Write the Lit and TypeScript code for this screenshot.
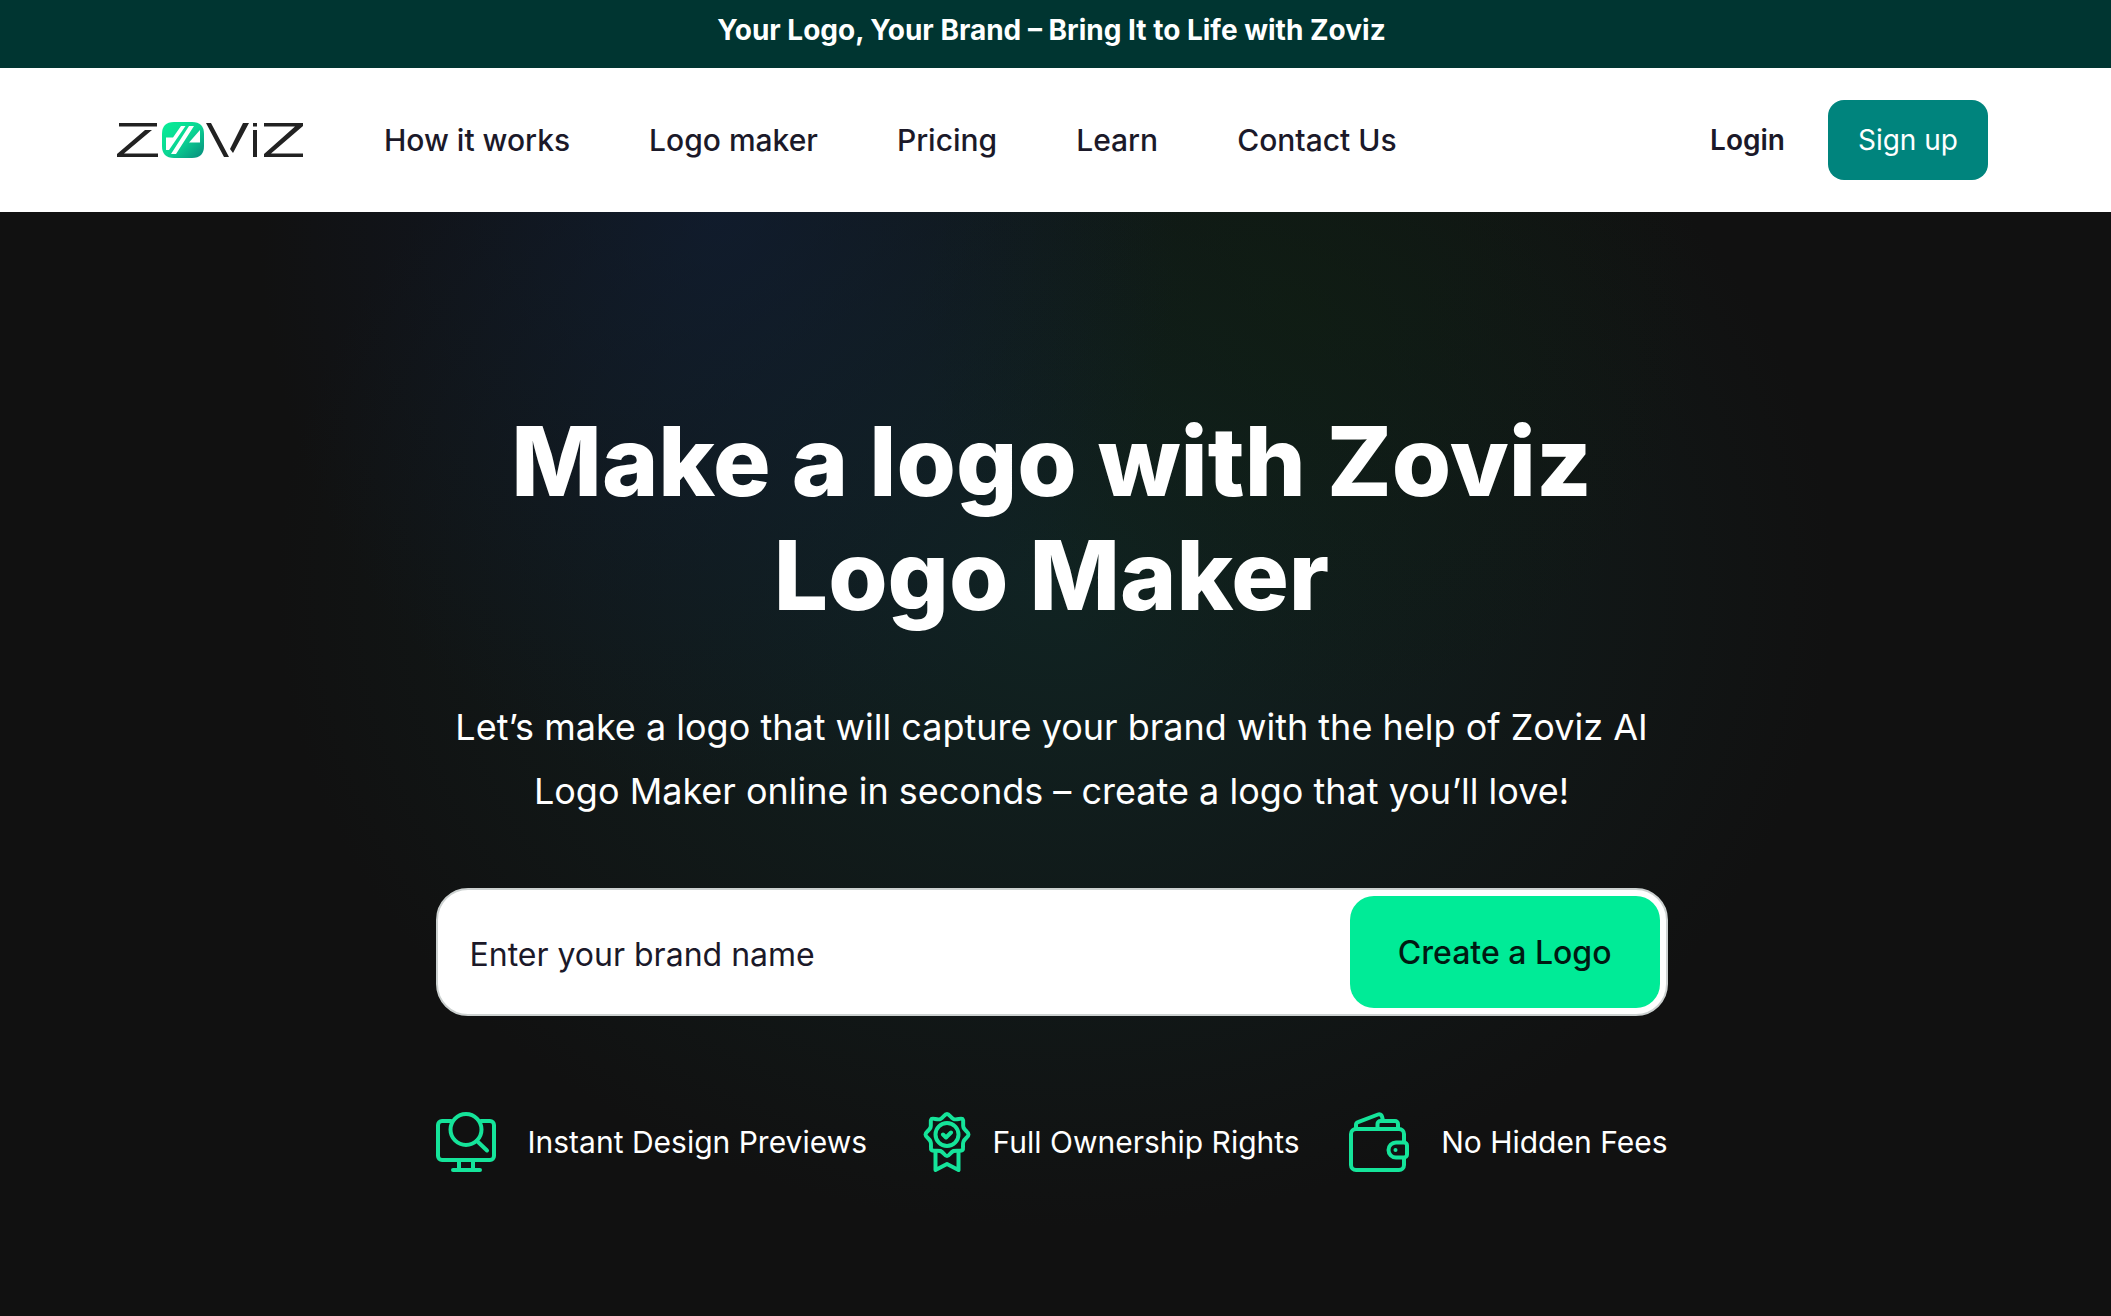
import { LitElement, html, css, svg } from "lit";
import { customElement } from "lit/decorators.js";

const monitorIcon = svg`
  <svg class="icon" viewBox="0 0 60 60" aria-hidden="true">
    <path d="M15 9H6a4 4 0 0 0-4 4v31a4 4 0 0 0 4 4h48a4 4 0 0 0 4-4V13a4 4 0 0 0-4-4H45" />
    <circle cx="30" cy="17.5" r="15.5" />
    <path d="M41 29 51 38.5M23 48v10M37 48v10M17 58h27" />
  </svg>`;

const badgeIcon = svg`
  <svg class="icon" viewBox="0 0 60 60" aria-hidden="true">
    <path d="M30 2c2.5 0 3.5 3.5 6.500 5S44 5.500 45.500 7s0 5.500 1 8.500S51.500 20 51.500 22.500 48 26 46.500 29.500s.5 7-1 8.500-6 0-9 1-4 5-6.500 5-3.500-4-6.500-5-7.500.5-9-1 .5-5-1-8.500S8.500 25 8.500 22.500s4-4 5-7-.5-7 1-8.500 6 1.500 9 0S27.500 2 30 2Z" />
    <circle cx="30" cy="22.5" r="11.5" />
    <path d="M26 22.5 29 25.5 34 20.5M18.500 39v19l11.500-6 11.500 6V39" />
  </svg>`;

const walletIcon = svg`
  <svg class="icon" viewBox="0 0 60 60" aria-hidden="true">
    <rect x="2" y="17" width="53" height="41" rx="5" />
    <path d="M7 17v-4a3 3 0 0 1 2-2.800L29 2.500a3 3 0 0 1 4 2l1 4" />
    <path d="M28.500 17v-5a3 3 0 0 1 3-3H46a3 3 0 0 1 3 3v5" />
    <path class="flap" d="M55 30.500H47a7.500 7.500 0 0 0 0 15h8a3 3 0 0 0 3-3v-9a3 3 0 0 0-3-3Z" />
    <circle class="dot" cx="46.5" cy="38" r="2" />
  </svg>`;

@customElement("app-root")
export class AppRoot extends LitElement {
  static styles = css`
    :host {
      display: flex;
      flex-direction: column;
      min-height: 100vh;
      background: #111;
      color: #fff;
      font-family: Inter, "Liberation Sans", sans-serif;
    }
    * {
      box-sizing: border-box;
    }
    a {
      color: inherit;
      text-decoration: none;
    }
    .promo {
      background: #003531;
      padding: 12px 8px 20px 0;
      text-align: center;
      font-size: 28px;
      line-height: 36px;
      font-weight: 700;
      margin: 0;
    }
    .header {
      display: flex;
      align-items: center;
      background: #fff;
      color: #1b1929;
      padding: 32px 123px 32px 116px;
    }
    .logo {
      display: block;
      width: 188px;
      height: 40px;
    }
    .nav {
      display: flex;
      gap: 79px;
      margin-left: 80px;
      font-size: 30px;
      line-height: 40px;
      font-weight: 500;
    }
    .account {
      display: flex;
      align-items: center;
      gap: 43px;
      margin-left: auto;
      font-size: 28px;
      line-height: 40px;
    }
    .login {
      font-weight: 600;
    }
    .signup {
      background: #00847d;
      color: #fff;
      border-radius: 16px;
      padding: 20px 30px;
    }
    .hero {
      flex: 1;
      padding: 192px 8px 120px 0;
      background:
        radial-gradient(ellipse 460px 580px at 34% 0%, rgba(16, 32, 62, 0.55), transparent),
        radial-gradient(ellipse 400px 420px at 62% 8%, rgba(14, 32, 14, 0.45), transparent),
        radial-gradient(ellipse 780px 640px at 50% 34%, rgba(16, 38, 37, 0.85), transparent),
        #111;
    }
    .content {
      width: 100%;
      max-width: 1232px;
      margin: 0 auto;
    }
    .title {
      margin: 0;
      font-size: 96px;
      line-height: 114px;
      font-weight: 800;
      text-align: center;
    }
    .lead {
      margin: 63px 0 65px;
      font-size: 36px;
      line-height: 64px;
      font-weight: 400;
      text-align: center;
    }
    .form {
      display: flex;
      height: 128px;
      padding: 6px;
      background: #fff;
      border: 2px solid #ccd1d0;
      border-radius: 32px;
    }
    .brand {
      flex: 1;
      min-width: 0;
      border: 0;
      outline: 0;
      background: transparent;
      padding: 4px 24px 0 26px;
      font: inherit;
      font-size: 32px;
      color: #1b1929;
    }
    .brand::placeholder {
      color: #1b1929;
      opacity: 1;
    }
    .create {
      border: 0;
      border-radius: 24px;
      background: #00eb97;
      color: #001a12;
      padding: 0 48px;
      font: inherit;
      font-size: 32px;
      font-weight: 500;
    }
    .perks {
      display: flex;
      justify-content: space-between;
      list-style: none;
      margin: 96px 0 0;
      padding: 0;
      font-size: 30px;
      line-height: 40px;
    }
    .perk {
      display: flex;
      align-items: center;
      gap: 32px;
    }
    .perk.tight {
      gap: 16px;
    }
    .icon {
      display: block;
      width: 60px;
      height: 60px;
      fill: none;
      stroke: #15e49a;
      stroke-width: 4;
      stroke-linecap: round;
      stroke-linejoin: round;
    }
    .flap {
      fill: #111;
    }
    .dot {
      fill: #15e49a;
      stroke: none;
    }
  `;

  private links = ["How it works", "Logo maker", "Pricing", "Learn", "Contact Us"];

  render() {
    return html`
      <p class="promo">Your Logo, Your Brand – Bring It to Life with Zoviz</p>
      <header class="header">
        <a href="#" aria-label="Zoviz">
          <svg class="logo" viewBox="0 0 188 40" aria-hidden="true">
            <defs>
              <linearGradient id="mark" x1="0" y1="0" x2="1" y2="1">
                <stop offset="0" stop-color="#08ee96" />
                <stop offset="0.5" stop-color="#0bd694" />
                <stop offset="1" stop-color="#078a7c" />
              </linearGradient>
            </defs>
            <g fill="#222">
              <path d="M3 3H41V6.500H3ZM29 10H36L8 33.500H42V37H1V34Z" />
              <path d="M90 3H95L113 37H108ZM127 3H133L117 33L114 29Z" />
              <path d="M137 3H141V6.500H137ZM137 10H141V37H137Z" />
              <path d="M148 3H187V6L155 33.500H187V37H148V34L179 6.500H148Z" />
            </g>
            <path fill="url(#mark)" d="M58 2H76Q88 2 88 14V26Q88 38 76 38H58Q46 38 46 26V14Q46 2 58 2Z" />
            <path fill="#fff" d="M50 17.500H57L65 6H69.500L53 30H50ZM73 6H78L60 34H55ZM84 10V22.500H73Z" />
          </svg>
        </a>
        <nav class="nav" aria-label="Main">
          ${this.links.map((label) => html`<a href="#">${label}</a>`)}
        </nav>
        <div class="account">
          <a class="login" href="#">Login</a>
          <a class="signup" href="#">Sign up</a>
        </div>
      </header>
      <main class="hero">
        <div class="content">
          <h1 class="title">Make a logo with Zoviz<br />Logo Maker</h1>
          <p class="lead">
            Let’s make a logo that will capture your brand with the help of Zoviz AI Logo Maker online in seconds –
            create a logo that you’ll love!
          </p>
          <form class="form" @submit=${(e: Event) => e.preventDefault()}>
            <input class="brand" type="text" placeholder="Enter your brand name" aria-label="Enter your brand name" />
            <button class="create" type="submit">Create a Logo</button>
          </form>
          <ul class="perks">
            <li class="perk">${monitorIcon}<span>Instant Design Previews</span></li>
            <li class="perk tight">${badgeIcon}<span>Full Ownership Rights</span></li>
            <li class="perk">${walletIcon}<span>No Hidden Fees</span></li>
          </ul>
        </div>
      </main>
    `;
  }
}
